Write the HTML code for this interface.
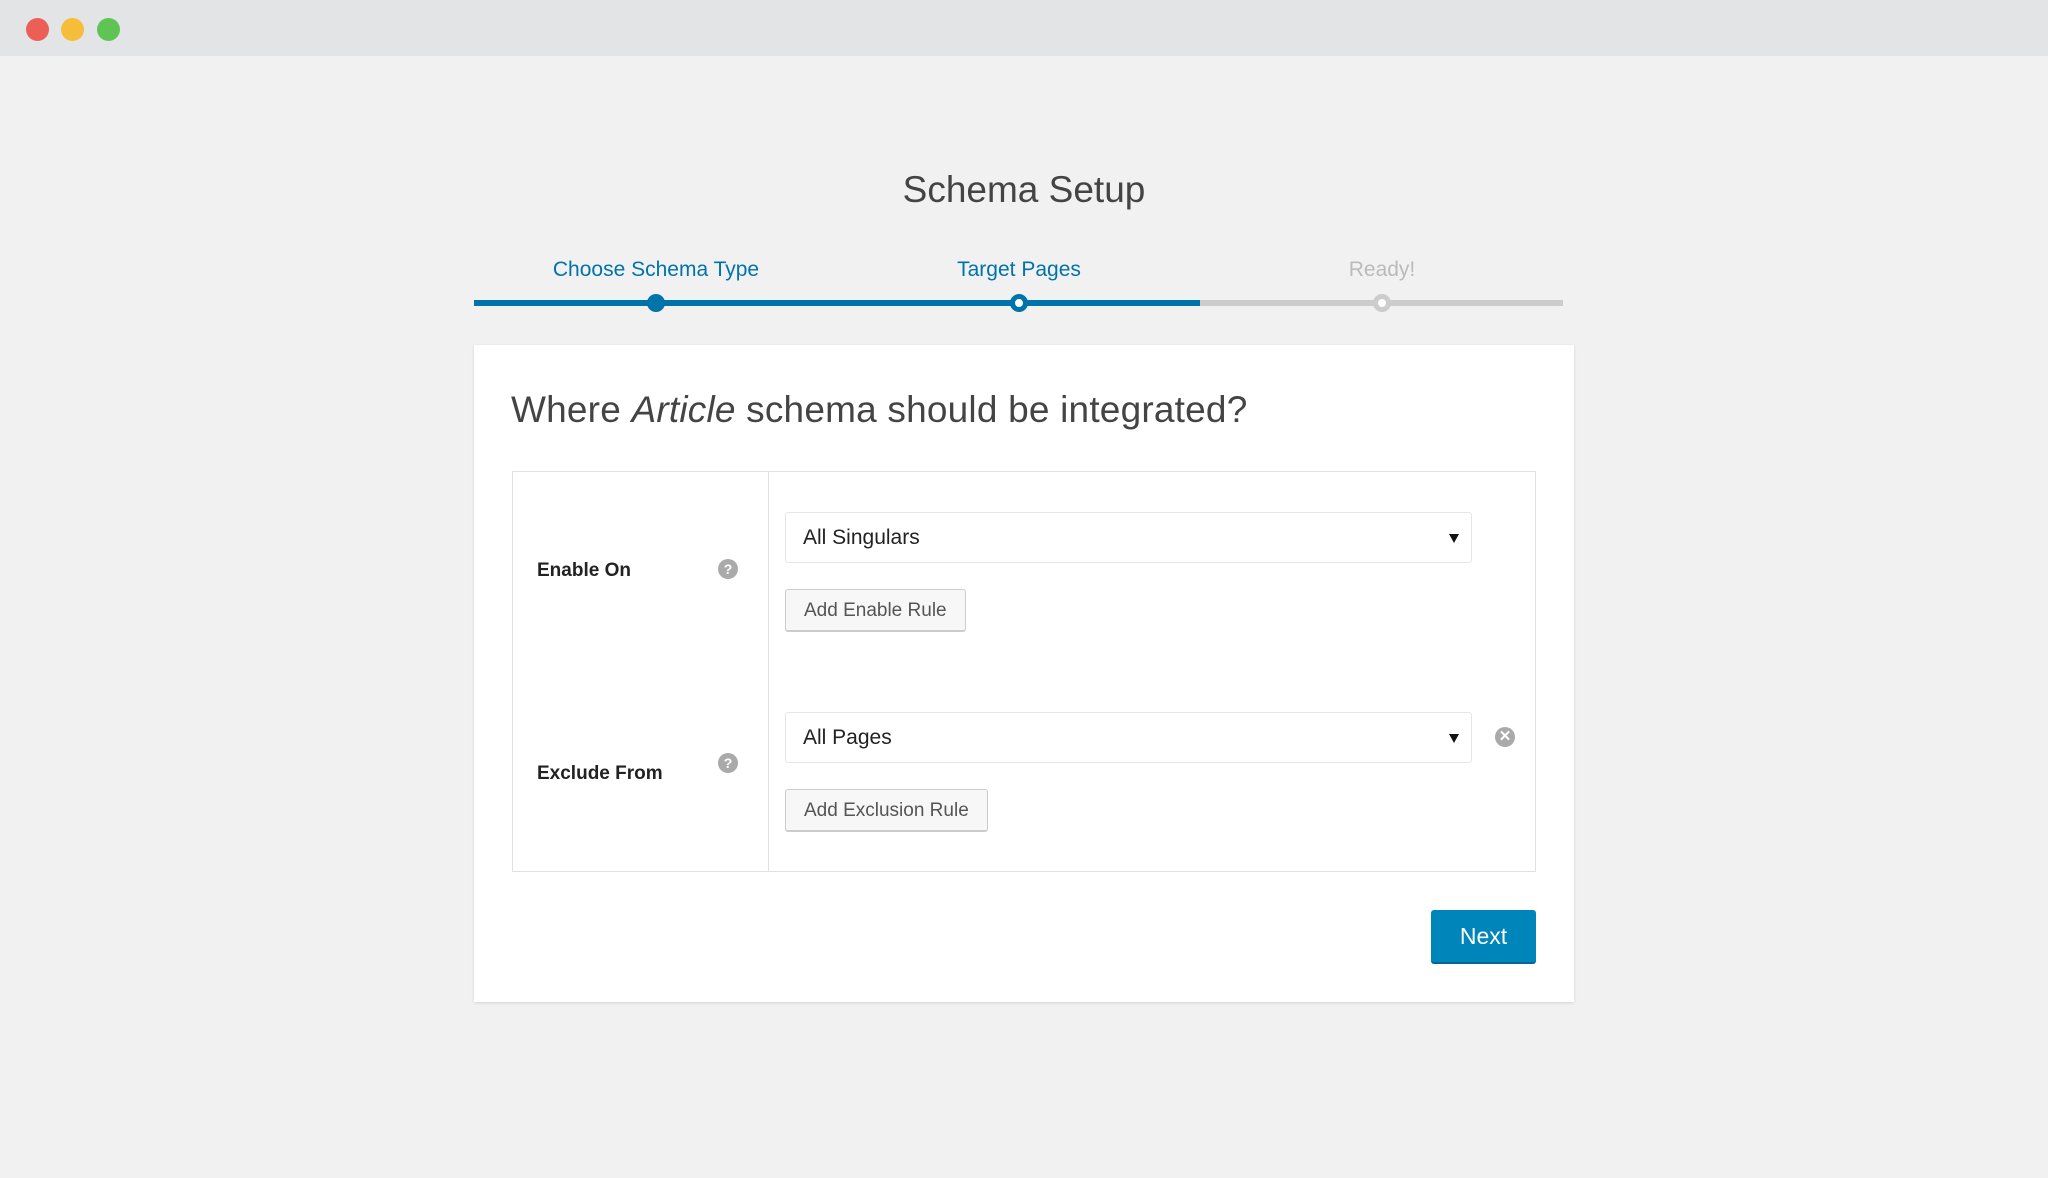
<!DOCTYPE html>
<html><head><meta charset="utf-8"><style>
*{box-sizing:border-box;margin:0;padding:0}
body{width:2048px;height:1178px;background:#f1f1f1;font-family:"Liberation Sans",sans-serif;position:relative;overflow:hidden}
.bar{position:absolute;left:0;top:0;width:2048px;height:56px;background:#e3e4e6}
.dot{position:absolute;top:18px;width:23px;height:23px;border-radius:50%}
.a{position:absolute}
.lbl{font-size:21px;color:#0073aa;transform:translateX(-50%);top:258px}
.sel{position:absolute;left:785px;width:687px;height:51px;border:1px solid #e6e6e6;border-radius:3px;background:#fff;font-size:21px;color:#222;padding:13px 17px}
.sel:after{content:"";position:absolute;right:12px;top:21px;border-left:5px solid transparent;border-right:5px solid transparent;border-top:9px solid #111}
.btn{position:absolute;left:785px;height:43px;border:1px solid #ccc;border-bottom:2px solid #ccc;border-radius:3px;background:#f7f7f7;color:#555;font-size:19px;padding:10px 18px}
.help{position:absolute;width:20px;height:20px;border-radius:50%;background:#aaa;color:#fff;font-size:14px;font-weight:bold;text-align:center;line-height:20px}
.bold{position:absolute;font-weight:bold;font-size:19px;color:#222}
</style></head><body>
<div class="bar"></div>
<div class="dot" style="left:26px;background:#ec5f57"></div>
<div class="dot" style="left:61px;background:#f5bd39"></div>
<div class="dot" style="left:97px;background:#5fc454"></div>
<div class="a" style="left:0;width:2048px;top:169px;text-align:center;font-size:37px;color:#444">Schema Setup</div>
<div class="a lbl" style="left:656px">Choose Schema Type</div>
<div class="a lbl" style="left:1019px">Target Pages</div>
<div class="a lbl" style="left:1382px;color:#bbb">Ready!</div>
<div class="a" style="left:474px;top:300px;width:1089px;height:6px;background:#ccc"></div>
<div class="a" style="left:474px;top:300px;width:726px;height:6px;background:#0073aa"></div>
<div class="a" style="left:647px;top:294px;width:18px;height:18px;border-radius:50%;background:#0073aa"></div>
<div class="a" style="left:1010px;top:294px;width:18px;height:18px;border-radius:50%;background:#fff;border:5px solid #0073aa"></div>
<div class="a" style="left:1373px;top:294px;width:18px;height:18px;border-radius:50%;background:#fff;border:5px solid #ccc"></div>
<div class="a" style="left:474px;top:345px;width:1100px;height:657px;background:#fff;box-shadow:0 1px 3px rgba(0,0,0,.12)"></div>
<div class="a" style="left:511px;top:389px;font-size:37px;color:#444;letter-spacing:0.2px">Where <i>Article</i> schema should be integrated?</div>
<div class="a" style="left:512px;top:471px;width:1024px;height:401px;border:1px solid #e1e1e1"></div>
<div class="a" style="left:768px;top:471px;width:1px;height:401px;background:#e1e1e1"></div>
<div class="bold" style="left:537px;top:560px">Enable On</div>
<div class="help" style="left:718px;top:559px">?</div>
<div class="sel" style="top:512px">All Singulars</div>
<div class="btn" style="top:589px">Add Enable Rule</div>
<div class="bold" style="left:537px;top:763px">Exclude From</div>
<div class="help" style="left:718px;top:753px">?</div>
<div class="sel" style="top:712px">All Pages</div>
<div class="help" style="left:1495px;top:727px;font-size:15px">✕</div>
<div class="btn" style="top:789px">Add Exclusion Rule</div>
<div class="a" style="left:1431px;top:910px;width:105px;height:54px;background:#0085ba;border-radius:3px;border-bottom:2px solid #006799;color:#fff;font-size:23px;text-align:center;line-height:52px">Next</div>
</body></html>
